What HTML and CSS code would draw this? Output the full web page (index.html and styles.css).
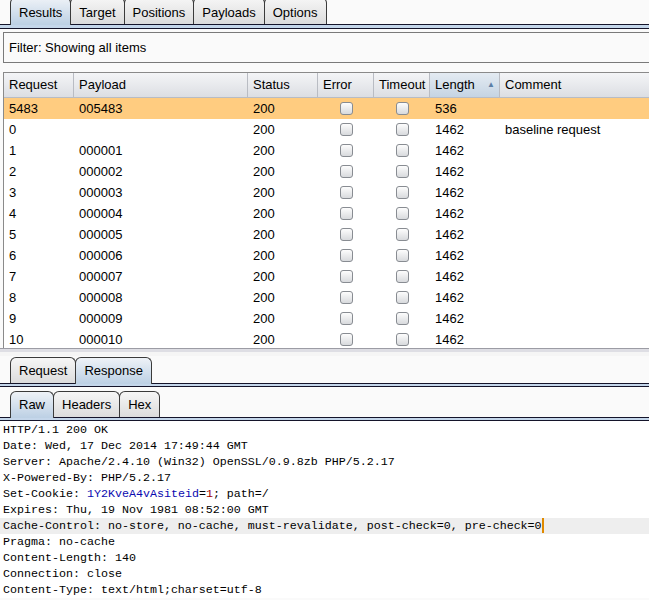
FILE: index.html
```html
<!DOCTYPE html>
<html>
<head>
<meta charset="utf-8">
<link rel="stylesheet" href="styles.css">
</head>
<body>
<div class="app">
  <div class="tabbar top">
    <div class="tab sel">Results</div>
    <div class="tab">Target</div>
    <div class="tab">Positions</div>
    <div class="tab">Payloads</div>
    <div class="tab">Options</div>
  </div>
  <div class="strip"></div>

  <div class="filter">Filter: Showing all items</div>

  <div class="table">
    <div class="row head">
      <div class="c">Request</div>
      <div class="c">Payload</div>
      <div class="c">Status</div>
      <div class="c">Error</div>
      <div class="c">Timeout</div>
      <div class="c sorted">Length<span class="arrow">▲</span></div>
      <div class="c">Comment</div>
    </div>
    <div class="row hl">
      <div class="c">5483</div><div class="c">005483</div><div class="c">200</div>
      <div class="c cb"><span class="box"></span></div><div class="c cb"><span class="box"></span></div>
      <div class="c">536</div><div class="c"></div>
    </div>
    <div class="row">
      <div class="c">0</div><div class="c"></div><div class="c">200</div>
      <div class="c cb"><span class="box"></span></div><div class="c cb"><span class="box"></span></div>
      <div class="c">1462</div><div class="c">baseline request</div>
    </div>
    <div class="row"><div class="c">1</div><div class="c">000001</div><div class="c">200</div><div class="c cb"><span class="box"></span></div><div class="c cb"><span class="box"></span></div><div class="c">1462</div><div class="c"></div></div>
    <div class="row"><div class="c">2</div><div class="c">000002</div><div class="c">200</div><div class="c cb"><span class="box"></span></div><div class="c cb"><span class="box"></span></div><div class="c">1462</div><div class="c"></div></div>
    <div class="row"><div class="c">3</div><div class="c">000003</div><div class="c">200</div><div class="c cb"><span class="box"></span></div><div class="c cb"><span class="box"></span></div><div class="c">1462</div><div class="c"></div></div>
    <div class="row"><div class="c">4</div><div class="c">000004</div><div class="c">200</div><div class="c cb"><span class="box"></span></div><div class="c cb"><span class="box"></span></div><div class="c">1462</div><div class="c"></div></div>
    <div class="row"><div class="c">5</div><div class="c">000005</div><div class="c">200</div><div class="c cb"><span class="box"></span></div><div class="c cb"><span class="box"></span></div><div class="c">1462</div><div class="c"></div></div>
    <div class="row"><div class="c">6</div><div class="c">000006</div><div class="c">200</div><div class="c cb"><span class="box"></span></div><div class="c cb"><span class="box"></span></div><div class="c">1462</div><div class="c"></div></div>
    <div class="row"><div class="c">7</div><div class="c">000007</div><div class="c">200</div><div class="c cb"><span class="box"></span></div><div class="c cb"><span class="box"></span></div><div class="c">1462</div><div class="c"></div></div>
    <div class="row"><div class="c">8</div><div class="c">000008</div><div class="c">200</div><div class="c cb"><span class="box"></span></div><div class="c cb"><span class="box"></span></div><div class="c">1462</div><div class="c"></div></div>
    <div class="row"><div class="c">9</div><div class="c">000009</div><div class="c">200</div><div class="c cb"><span class="box"></span></div><div class="c cb"><span class="box"></span></div><div class="c">1462</div><div class="c"></div></div>
    <div class="row"><div class="c">10</div><div class="c">000010</div><div class="c">200</div><div class="c cb"><span class="box"></span></div><div class="c cb"><span class="box"></span></div><div class="c">1462</div><div class="c"></div></div>
  </div>

  <div class="divider"></div>

  <div class="tabbar sub">
    <div class="tab">Request</div>
    <div class="tab sel">Response</div>
  </div>
  <div class="strip thin"></div>

  <div class="tabbar sub2">
    <div class="tab sel">Raw</div>
    <div class="tab">Headers</div>
    <div class="tab">Hex</div>
  </div>
  <div class="strip thin"></div>

  <div class="raw">
    <div class="ln">HTTP/1.1 200 OK</div>
    <div class="ln">Date: Wed, 17 Dec 2014 17:49:44 GMT</div>
    <div class="ln">Server: Apache/2.4.10 (Win32) OpenSSL/0.9.8zb PHP/5.2.17</div>
    <div class="ln">X-Powered-By: PHP/5.2.17</div>
    <div class="ln">Set-Cookie: <span class="ck">1Y2KveA4vAsiteid</span>=<span class="cv">1</span>; path=/</div>
    <div class="ln">Expires: Thu, 19 Nov 1981 08:52:00 GMT</div>
    <div class="ln cur">Cache-Control: no-store, no-cache, must-revalidate, post-check=0, pre-check=0<span class="caret"></span></div>
    <div class="ln">Pragma: no-cache</div>
    <div class="ln">Content-Length: 140</div>
    <div class="ln">Connection: close</div>
    <div class="ln">Content-Type: text/html;charset=utf-8</div>
  </div>
</div>
</body>
</html>
```

FILE: styles.css
```css
html, body {
  margin: 0;
  padding: 0;
}
body {
  background: #fafafa;
  font-family: "Liberation Sans", Arial, sans-serif;
  font-size: 13px;
  color: #000;
  width: 649px;
  height: 600px;
  overflow: hidden;
}
.app {
  display: flex;
  flex-direction: column;
}

/* tabs */
.tabbar {
  display: flex;
  padding-left: 10px;
  height: 24px;
  align-items: stretch;
}
.tabbar.top {
  margin-top: -3px;
  height: 27px;
}
.tab {
  box-sizing: border-box;
  border: 1px solid #3a3a3a;
  border-bottom: none;
  border-radius: 6px 6px 0 0;
  margin-right: -1px;
  padding: 4px 8px 0 8px;
  background: linear-gradient(#f6f6f6, #dcdcdc);
  line-height: 18px;
  height: 100%;
}
.tabbar.top .tab { padding-top: 6px; }
.tab.sel {
  background: linear-gradient(#eef2f7, #bcd0e4);
  position: relative;
  z-index: 1;
  margin-bottom: -1px;
  height: calc(100% + 1px);
}
.strip {
  height: 5px;
  box-sizing: border-box;
  border-top: 1px solid #14142a;
  border-bottom: 1px solid #14142a;
  background: #c4d6ea;
}
.strip.thin {
  height: 4px;
}

/* filter */
.filter {
  margin: 3px 0 0 3px;
  height: 31px;
  box-sizing: border-box;
  border: 1px solid #7a7a7a;
  border-right: none;
  background: #fafafa;
  padding-left: 5px;
  line-height: 29px;
}

/* table */
.table {
  margin: 9px 0 0 3px;
  height: 275px;
  overflow: hidden;
  border-left: 1px solid #8a8a8a;
  border-top: 1px solid #8a8a8a;
  background: #fff;
}
.row {
  display: grid;
  grid-template-columns: 70px 174px 70px 56px 56px 70px 1fr;
  height: 21px;
  line-height: 21px;
}
.row.head {
  height: 25px;
  line-height: 23px;
  background: linear-gradient(#f4f5f7, #dcdee3);
  border-bottom: 1px solid #b8bcc4;
  box-sizing: border-box;
}
.row.head .c {
  border-right: 1px solid #b9bcc3;
}
.row.head .c:last-child { border-right: none; }
.c {
  padding-left: 5px;
  white-space: nowrap;
  overflow: hidden;
  position: relative;
}
.row.head .c.sorted {
  background: linear-gradient(#e4ebf2, #c5d4e3);
}
.arrow {
  position: absolute;
  left: 57px;
  top: 0;
  font-size: 8px;
  color: #5b7fa6;
}
.row.hl { background: #ffcc80; }
.c.cb {
  padding-left: 0;
  display: flex;
  align-items: center;
  justify-content: center;
}
.box {
  width: 13px;
  height: 13px;
  box-sizing: border-box;
  border: 1px solid #888c92;
  border-radius: 3px;
  background: linear-gradient(#fdfdfd, #d8dadd);
  margin-left: 0;
}

.divider {
  height: 8px;
  box-sizing: border-box;
  border-top: 1px solid #9c9ca4;
  background: linear-gradient(#dedee4 0, #dedee4 3px, #f5f5f5 3px);
}
.tabbar.sub {
  margin-top: 1px;
  height: 26px;
}
.tabbar.sub2 {
  margin-top: 4px;
  height: 26px;
}

/* raw */
.raw {
  background: #fff;
  flex: 1;
  padding-top: 1px;
  height: 190px;
  font-family: "Liberation Mono", "Courier New", monospace;
  font-size: 11.67px;
  color: #000;
}
.ln {
  height: 16px;
  line-height: 16px;
  padding-left: 3px;
  white-space: pre;
}
.ln.cur { background: #eeeeee; }
.ck { color: #0a0ab0; }
.cv { color: #a00000; }
.caret {
  display: inline-block;
  width: 2px;
  height: 15px;
  vertical-align: top;
  background: #e08a00;
}
```
